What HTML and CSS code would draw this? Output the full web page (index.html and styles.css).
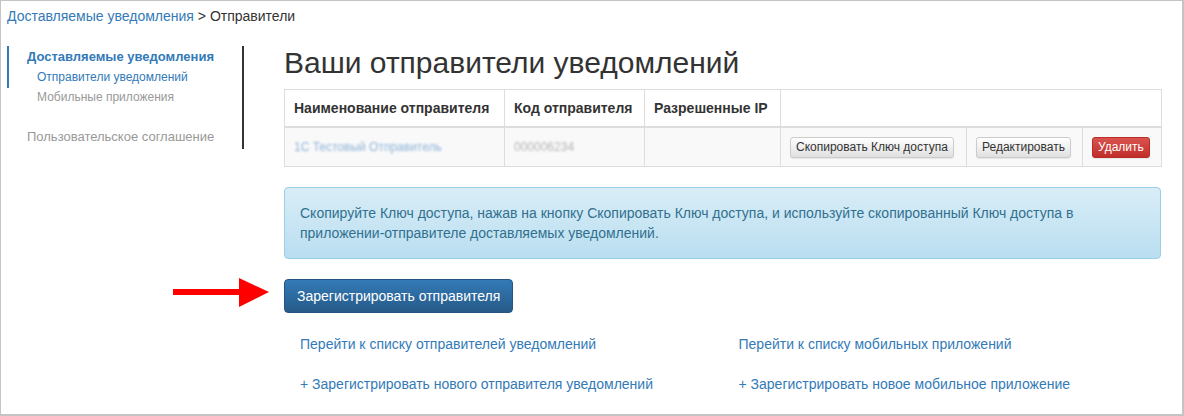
FILE: index.html
```html
<!DOCTYPE html>
<html lang="ru">
<head>
    <meta charset="UTF-8">
    <title>Отправители уведомлений</title>
    <link rel="stylesheet" href="styles.css">
</head>
<body>

<div class="page">
    <div class="breadcrumb">
        <a href="#">Доставляемые уведомления</a> &gt; Отправители
    </div>

    <div class="layout">
        <div class="sidebar">
            <div class="nav-active">
                <a class="nav-title" href="#">Доставляемые уведомления</a>
                <a class="nav-sub" href="#">Отправители уведомлений</a>
            </div>
            <a class="nav-sub muted" href="#">Мобильные приложения</a>
            <a class="nav-title muted nav-gap" href="#">Пользовательское соглашение</a>
        </div>

        <div class="main">
            <h1>Ваши отправители уведомлений</h1>

            <table class="senders">
                <colgroup>
                    <col style="width: 220px">
                    <col style="width: 140px">
                    <col style="width: 136px">
                    <col style="width: 186px">
                    <col style="width: 116px">
                    <col style="width: 79px">
                </colgroup>
                <thead>
                    <tr>
                        <th>Наименование отправителя</th>
                        <th>Код отправителя</th>
                        <th>Разрешенные IP</th>
                        <th colspan="3"></th>
                    </tr>
                </thead>
                <tbody>
                    <tr>
                        <td><span class="blur link">1С Тестовый Отправитель</span></td>
                        <td><span class="blur code">000006234</span></td>
                        <td></td>
                        <td><button class="btn btn-xs">Скопировать Ключ доступа</button></td>
                        <td><button class="btn btn-xs">Редактировать</button></td>
                        <td><button class="btn btn-xs btn-danger">Удалить</button></td>
                    </tr>
                </tbody>
            </table>

            <div class="alert">
                Скопируйте Ключ доступа, нажав на кнопку Скопировать Ключ доступа, и используйте скопированный Ключ доступа в
                приложении-отправителе доставляемых уведомлений.
            </div>

            <div class="register">
                <svg class="arrow" width="97" height="30" viewBox="0 0 97 30">
                    <rect x="0" y="11" width="68" height="6" fill="#ff0000"/>
                    <polygon points="66,0 96,14 66,29" fill="#ff0000"/>
                </svg>
                <button class="btn btn-primary">Зарегистрировать отправителя</button>
            </div>

            <div class="links">
                <div class="links-col">
                    <a href="#">Перейти к списку отправителей уведомлений</a>
                    <a href="#">+ Зарегистрировать нового отправителя уведомлений</a>
                </div>
                <div class="links-col">
                    <a href="#">Перейти к списку мобильных приложений</a>
                    <a href="#">+ Зарегистрировать новое мобильное приложение</a>
                </div>
            </div>
        </div>
    </div>
</div>

</body>
</html>
```

FILE: styles.css
```css
body {
    margin: 0;
    font-family: "Liberation Sans", Arial, sans-serif;
    font-size: 14px;
    line-height: 20px;
    color: #333;
    background-color: #fff;
}
a {
    color: #337ab7;
    text-decoration: none;
}
.page {
    height: 416px;
    box-sizing: border-box;
    border-top: 1px solid #c4c4c4;
    border-left: 1px solid #c4c4c4;
    border-right: 2px solid #c4c4c4;
    border-bottom: 2px solid #c4c4c4;
    overflow: hidden;
}
.breadcrumb {
    padding: 5px 0 0 6px;
}
.layout {
    display: flex;
    margin-top: 20px;
    padding-left: 6px;
}
.sidebar {
    width: 235px;
    height: 103px;
    flex-shrink: 0;
    border-right: 2px solid #333;
    font-size: 13px;
}
.sidebar a {
    display: block;
    line-height: 20px;
}
.nav-active {
    border-left: 2px solid #337ab7;
    padding: 1px 0 1px;
}
.nav-title {
    padding-left: 18px;
    font-weight: bold;
}
.nav-sub {
    padding-left: 28px;
    font-size: 12px;
}
.sidebar .nav-sub.muted {
    padding-left: 30px;
    margin-top: -1px;
}
.sidebar .nav-title.muted {
    padding-left: 20px;
    font-weight: normal;
}
.muted {
    color: #999;
}
.nav-gap {
    margin-top: 20px;
}
.main {
    width: 877px;
    margin-left: 40px;
}
.main h1 {
    margin: 0 0 10px;
    font-size: 30px;
    font-weight: normal;
    line-height: 33px;
    color: #333;
}
.senders {
    width: 877px;
    table-layout: fixed;
    border-collapse: collapse;
    margin-bottom: 20px;
}
.senders th,
.senders td {
    border: 1px solid #ddd;
    padding: 8px 9px;
    text-align: left;
    white-space: nowrap;
}
.senders th {
    border-bottom-width: 2px;
    font-weight: bold;
    height: 20px;
}
.senders td {
    background-color: #f9f9f9;
    height: 22px;
    font-size: 12px;
}
.blur {
    filter: blur(1.2px);
    font-size: 12px;
}
.blur.link {
    color: #8fb4d9;
}
.blur.code {
    color: #b5b5b5;
}
.btn {
    font-family: inherit;
    font-size: 14px;
    line-height: 20px;
    padding: 6px 12px;
    border-radius: 4px;
    border: 1px solid #ccc;
    color: #333;
    background-image: linear-gradient(#fff, #e0e0e0);
    cursor: pointer;
}
.btn-xs {
    font-size: 12px;
    line-height: 17px;
    padding: 1px 5px;
    border-radius: 3px;
    box-shadow: 0 1px 1px rgba(0, 0, 0, 0.08);
}
.btn-danger {
    color: #fff;
    border-color: #b92c28;
    background-image: linear-gradient(#d9534f, #c12e2a);
}
.btn-primary {
    color: #fff;
    border-color: #245580;
    background-image: linear-gradient(#337ab7, #265a88);
}
.alert {
    padding: 15px;
    border: 1px solid #9acfea;
    border-radius: 4px;
    color: #31708f;
    background-image: linear-gradient(#d9edf7, #b9def0);
    margin-bottom: 20px;
}
.register {
    position: relative;
}
.register .arrow {
    position: absolute;
    left: -111px;
    top: -1px;
}
.links {
    display: flex;
    margin-top: 21px;
}
.links-col {
    width: 50%;
    box-sizing: border-box;
    padding-left: 16px;
}
.links-col a {
    display: block;
    margin-bottom: 20px;
}
```
